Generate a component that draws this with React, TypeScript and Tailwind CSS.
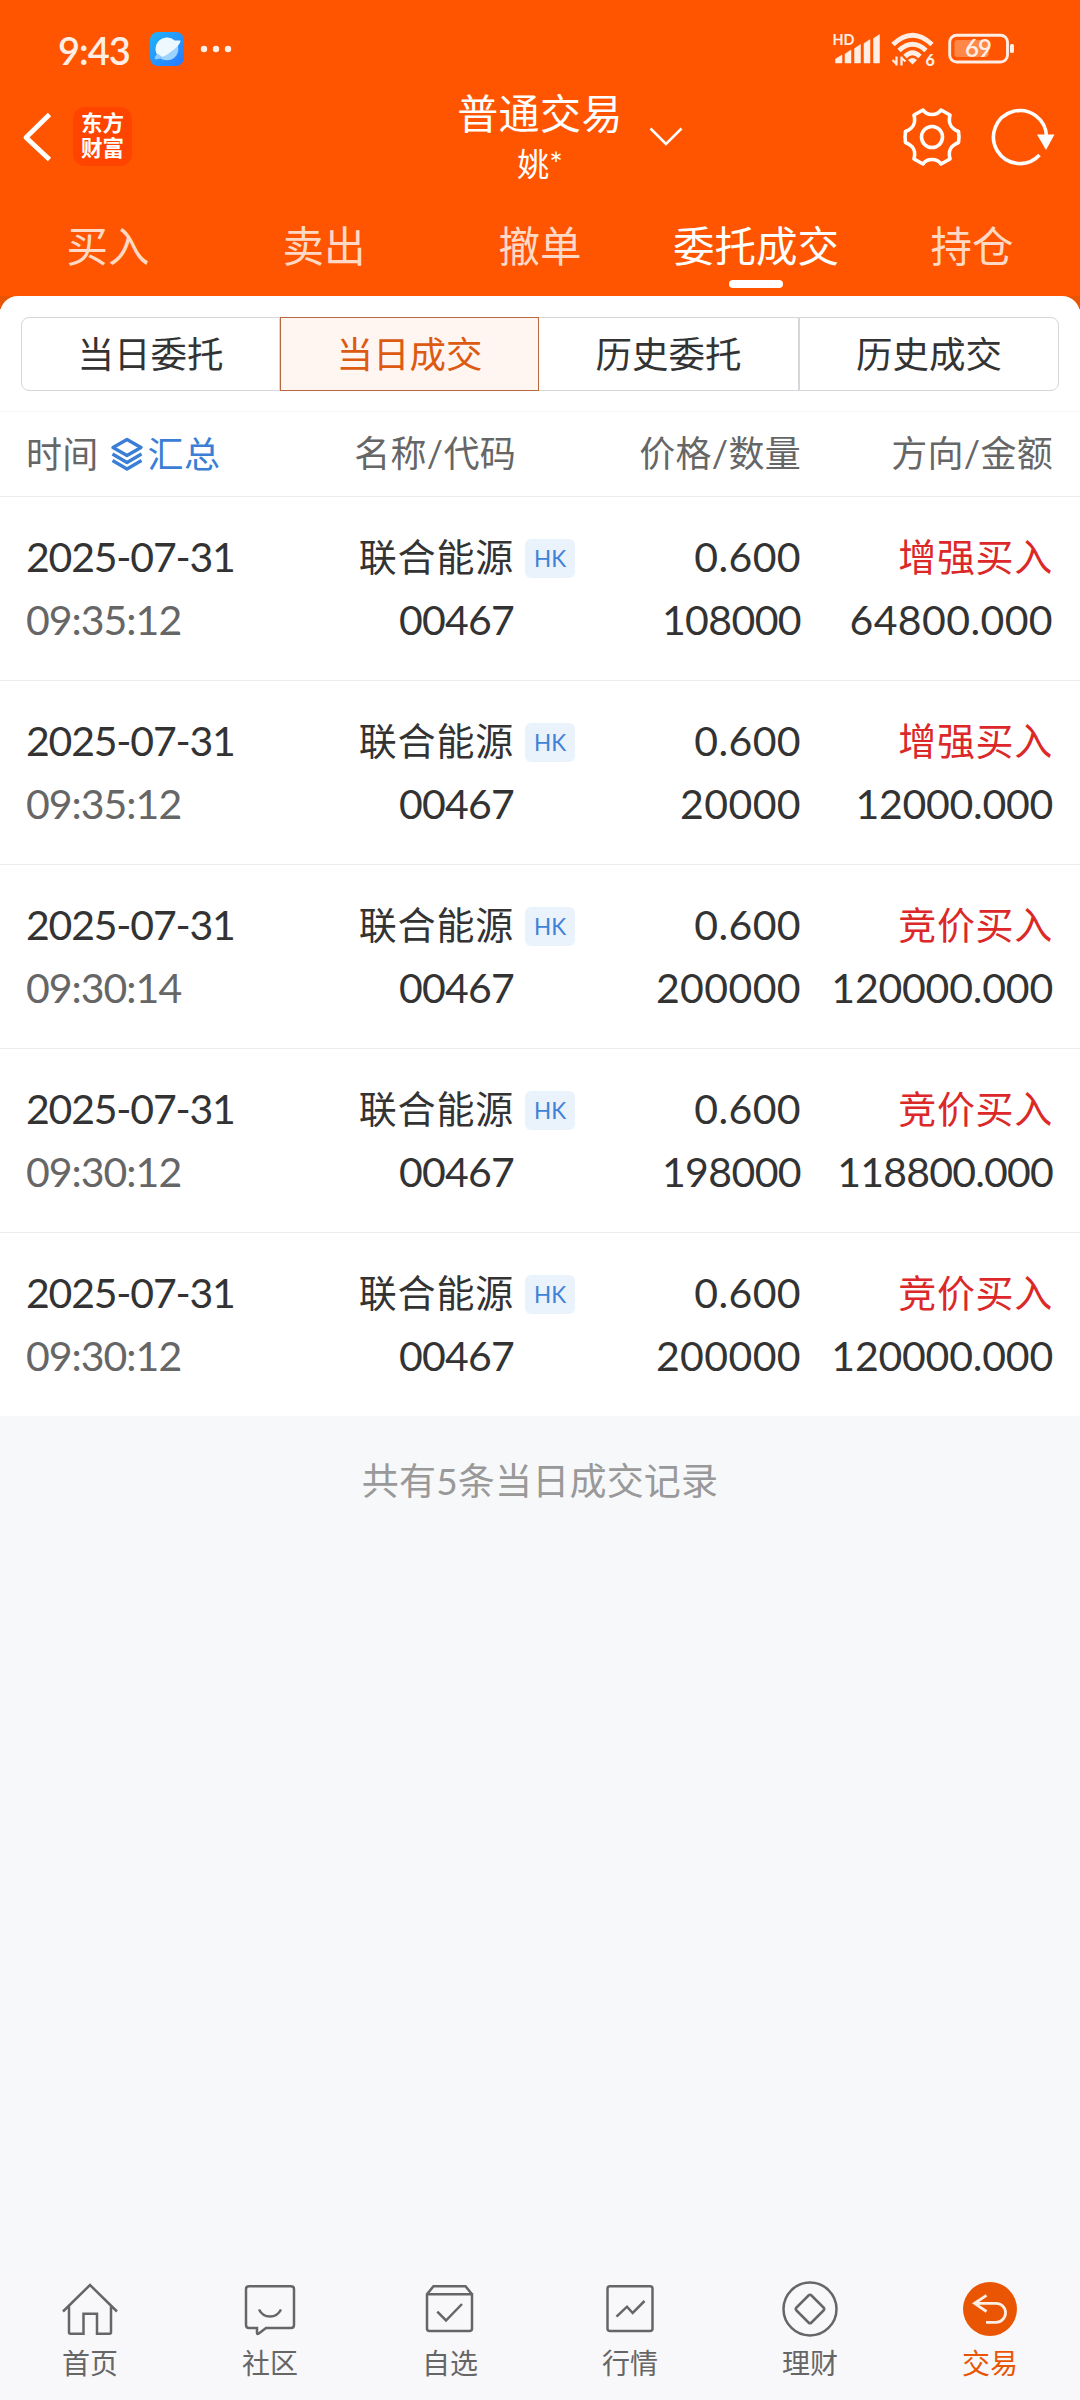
import React from "react";

type Deal = {
    date: string;
    time: string;
    name: string;
    code: string;
    price: string;
    amount: string;
    side: string;
    total: string;
}

const deals: Deal[] = [
    { date: "2025-07-31", time: "09:35:12", name: "联合能源", code: "00467", price: "0.600", amount: "108000", side: "增强买入", total: "64800.000" },
    { date: "2025-07-31", time: "09:35:12", name: "联合能源", code: "00467", price: "0.600", amount: "20000", side: "增强买入", total: "12000.000" },
    { date: "2025-07-31", time: "09:30:14", name: "联合能源", code: "00467", price: "0.600", amount: "200000", side: "竞价买入", total: "120000.000" },
    { date: "2025-07-31", time: "09:30:12", name: "联合能源", code: "00467", price: "0.600", amount: "198000", side: "竞价买入", total: "118800.000" },
    { date: "2025-07-31", time: "09:30:12", name: "联合能源", code: "00467", price: "0.600", amount: "200000", side: "竞价买入", total: "120000.000" },
];

const tabs = ["买入", "卖出", "撤单", "委托成交", "持仓"];
const segments = ["当日委托", "当日成交", "历史委托", "历史成交"];

const StatusBar: React.FC = () => (
    <div className="flex h-[98px] items-center justify-between pl-[58px] pr-[66px] text-[#ffeee5]">
        <div className="flex items-center">
            <span className="mt-[1px] w-[92px] text-[38px] font-semibold leading-none tracking-[-1px]">9:43</span>
            <svg width="34" height="34" viewBox="0 0 34 34">
                <defs>
                    <linearGradient id="planet" x1="0" y1="0" x2="1" y2="1">
                        <stop offset="0" stopColor="#20b4fb" />
                        <stop offset="1" stopColor="#2a78ff" />
                    </linearGradient>
                </defs>
                <rect width="34" height="34" rx="8" fill="url(#planet)" />
                <circle cx="17" cy="17" r="11.300" fill="#9dd3ff" />
                <path d="M10 26Q5 21 5.700 16A11.300 11.300 0 0 1 24.500 8.500L30.500 8.500Q30.500 12 24 17.500Q17 23.500 10 26Z" fill="#eef9ff" />
                <path d="M6 23Q4 26 5 27Q8 28 13 25.500L8 22Z" fill="#8accff" />
            </svg>
            <svg className="ml-[16px]" width="32" height="8" viewBox="0 0 32 8" fill="currentColor">
                <circle cx="4" cy="4" r="3.200" />
                <circle cx="16" cy="4" r="3.200" />
                <circle cx="28" cy="4" r="3.200" />
            </svg>
        </div>
        <svg width="186" height="40" viewBox="828 30 186 40" fill="currentColor">
            <text x="832.500" y="46" fontSize="15.500" fontWeight="700" textLength="22" lengthAdjust="spacingAndGlyphs">HD</text>
            <path d="M835.500 60l6.500-4v8h-6.500zM845 55l6-4v13h-6zM854.500 49.500l6-4V64h-6zM864 44.500l6-4V64h-6zM873.500 39.500l6-4V64h-6z" stroke="currentColor" strokeWidth="0.500" strokeLinejoin="round" />
            <g fill="none" stroke="currentColor" strokeWidth="4.800">
                <path d="M893 45.500Q912.500 27 932 45.500" />
                <path d="M899 51.500Q912.500 39 926 51.500" />
                <path d="M905 57.500Q912.500 50 920 57.500" />
            </g>
            <path d="M912.500 65.500l-4.500-4.500q4.500-4 9 0z" />
            <path d="M896.500 57.500v9M897 65.500l-4.500-4.500M901.500 66.500v-9M901 58.500l4.500 4" fill="none" stroke="currentColor" strokeWidth="2.300" />
            <text x="925.500" y="66.500" fontSize="16" fontWeight="900">6</text>
            <rect x="949.700" y="36.200" width="57.800" height="26.800" rx="7" fill="none" stroke="currentColor" strokeWidth="2.900" />
            <rect x="954.500" y="41" width="34" height="17" rx="3" fill="#ff8848" />
            <text x="965" y="57.500" fontSize="24" fontWeight="600" textLength="27">69</text>
            <rect x="1010" y="45" width="4" height="9" rx="1.500" />
        </svg>
    </div>
)

const TitleBar: React.FC = () => (
    <div className="flex h-[98px] items-start text-white">
        <div className="flex w-[320px] items-center pl-[22px] pt-[9px]">
            <svg width="30" height="50" viewBox="0 0 30 50" fill="none" stroke="currentColor" strokeWidth="4.800">
                <path d="M27.500 2.500L4 25.500L27.500 47.500" strokeLinejoin="round" />
            </svg>
            <div className="ml-[21px] flex h-[59px] w-[59px] flex-col items-center justify-center rounded-[12px] bg-[#ff4400] pb-[2px] text-[21.5px] font-bold leading-[25px]">
                <span>东方</span>
                <span>财富</span>
            </div>
        </div>
        <div className="flex w-[440px] items-start justify-center">
            <div className="flex flex-col items-center">
                <span className="-mt-[9px] text-[41px] leading-[50px] tracking-[0.4px]">普通交易</span>
                <span className="mt-[6px] text-[32px] leading-[38px]">姚*</span>
            </div>
        </div>
        <div className="-ml-[111px] flex w-[431px] items-center pt-[9px]">
            <svg width="34" height="20" viewBox="0 0 34 20" fill="none" stroke="currentColor" strokeWidth="2.600">
                <path d="M1.500 1.500L17 17L32.500 1.500" />
            </svg>
            <svg className="ml-[219px]" width="60" height="60" viewBox="-30 -30 60 60" fill="none" stroke="currentColor" strokeWidth="3.600" strokeLinejoin="round">
                <path d="M-9-27Q-6-22.500 0-22.500Q6-22.500 9-27L18-22C16-14 18-9 26.500-5.500Q27.500 0 26.500 5.500C18 9 16 14 18 22L9 27Q6 22.500 0 22.500Q-6 22.500-9 27L-18 22C-16 14-18 9-26.500 5.500Q-27.500 0-26.500-5.500C-18-9-16-14-18-22Z" />
                <circle r="10.500" />
            </svg>
            <svg className="ml-[29px]" width="64" height="60" viewBox="-29 -30 64 60">
                <path d="M26.500 0A26.500 26.500 0 1 0 19.500 18" fill="none" stroke="currentColor" strokeWidth="3.600" />
                <path d="M17-2.500H34.500L26 13Z" fill="currentColor" />
            </svg>
        </div>
    </div>
)

const LayersIcon: React.FC = () => (
    <svg width="32" height="34" viewBox="0 0 32 34" fill="none" stroke="currentColor" strokeWidth="3.300" strokeLinejoin="round">
        <path d="M16 2.500L30 10.500L16 18.500L2 10.500Z" />
        <path d="M1.500 17L16 25.500L30.500 17" />
        <path d="M1.500 23.500L16 32L30.500 23.500" />
    </svg>
)

// ones are narrow, so numbers holding them get tightened
const Num: React.FC<{ value: string }> = ({ value }) => {
    const ones = value.split("1").length - 1;
    return <span style={{ letterSpacing: `${(0.4 - (6 * ones) / value.length).toFixed(2)}px` }}>{value}</span>
}

const DealRow: React.FC<{ deal: Deal }> = ({ deal }) => (
    <div className="grid h-[184px] grid-cols-[26px_204px_284px_287px_252px] border-b border-[#ececec] pt-[28px] text-[41px] leading-[63px] text-[#333] last:h-[183px] last:border-b-0">
        <div />
        <div className="flex flex-col whitespace-nowrap">
            <span className="tracking-[-1.2px]">{deal.date}</span>
            <span className="tracking-[-1px] text-[#666]">{deal.time}</span>
        </div>
        <div className="flex flex-col items-end">
            <div className="flex h-[63px] items-center">
                <span className="text-[38px] tracking-[0.8px]">{deal.name}</span>
                <span className="-mr-[61px] ml-[11px] mt-[3px] h-[39px] w-[50px] rounded-[6px] bg-[#eaf2fc] text-center text-[22.5px] leading-[40px] text-[#3f82d8]">HK</span>
            </div>
            <span className="tracking-[-0.8px]">{deal.code}</span>
        </div>
        <div className="flex flex-col items-end">
            <Num value={deal.price} />
            <Num value={deal.amount} />
        </div>
        <div className="flex flex-col items-end">
            <span className="text-[38px] tracking-[0.7px] text-[#dc2828]">{deal.side}</span>
            <Num value={deal.total} />
        </div>
    </div>
)

type NavItem = {
    label: string;
    icon: React.ReactNode;
    active?: boolean;
}

const navItems: NavItem[] = [
    { label: "首页", icon: <path d="M2 31.500L29 5L56 31.500M8 26V52.500Q8 53.700 9.500 53.700H22.500V33.700H36V53.700H48.500Q50 53.700 50 52.500V26" /> },
    { label: "社区", icon: <><path d="M8 6.200H50Q53 6.200 53 9V45Q53 48 50 48H25L17.500 53.700Q16 54.500 16 53V48H8Q5 48 5 45V9Q5 6.200 8 6.200Z" /><path d="M18 29.500Q21.500 36.500 29 36.500Q36.500 36.500 40 29.500" /></> },
    { label: "自选", icon: <><path d="M6 14.300H51V48.500Q51 51 48.500 51H8.500Q6 51 6 48.500V14.300L12.500 6.200H44.500L51 14.300" /><path d="M16.300 31.700L25 40.500L41 24" /></> },
    { label: "行情", icon: <><rect x="6.500" y="6.200" width="45" height="44.800" rx="2.500" /><path d="M15.500 36.700L26 26.700L31.700 33L43.500 21" /></> },
    { label: "理财", icon: <><circle cx="29" cy="29" r="26.500" /><path d="M27.500 15.500Q29 14 30.500 15.500L42.500 27.500Q44 29 42.500 30.500L30.500 42.500Q29 44 27.500 42.500L15.500 30.500Q14 29 15.500 27.500Z" /></> },
    { label: "交易", active: true, icon: <><circle cx="29" cy="29" r="27" fill="#ea5504" stroke="none" /><path d="M25.500 15.300L13.500 23.300L25.500 31.500M14 23.300H35A9.500 9.500 0 0 1 35 42.300H25" stroke="#ffeee5" strokeWidth="2.800" /></> },
];

const App: React.FC = () => {
    return (
        <div className="flex h-[2400px] w-[1080px] flex-col overflow-hidden bg-[#f6f8fa] font-[Lato,'Noto_Sans_CJK_SC',sans-serif]">
            <header className="h-[296px] bg-[#ff5500]">
                <StatusBar />
                <TitleBar />
                <div className="grid h-[100px] grid-cols-5">
                    {tabs.map((tab, i) => (
                        <div key={tab} className={i === 3 ? "flex flex-col items-center text-[41.5px] text-white" : "flex flex-col items-center text-[41.5px] text-[#ffd9c5]"}>
                            <span className="mt-[20px] leading-[60px]">{tab}</span>
                            {i === 3 && <div className="mt-[4px] h-[8px] w-[54px] rounded-[4px] bg-white" />}
                        </div>
                    ))}
                </div>
            </header>

            <div className="bg-[linear-gradient(#ea5504_13px,#fff_13px)]">
                <div className="rounded-t-[18px] bg-white pt-[21px]">
                    <div className="mx-[21px] grid h-[74px] grid-cols-[259px_259px_260px_260px] text-[36.5px] leading-[72px] text-[#333]">
                        {segments.map((seg, i) => (
                            <div
                                key={seg}
                                className={
                                    i === 1
                                        ? "border border-[#b8683c] bg-[#fff5f1] text-center text-[#dc5a12]"
                                        : i === 0
                                            ? "rounded-l-[8px] border border-[#d6d6da] text-center"
                                            : i === 2
                                                ? "border-y border-r border-[#d6d6da] text-center"
                                                : "rounded-r-[8px] border border-[#d6d6da] text-center"
                                }
                            >
                                {seg}
                            </div>
                        ))}
                    </div>
                    <div className="mt-[20px] grid h-[86px] grid-cols-[26px_205px_285px_285px_252px] border-y border-t-[#f7f7f7] border-b-[#ececec] text-[36px] leading-[83px] tracking-[0.3px] text-[#666]">
                        <div />
                        <div className="flex items-center whitespace-nowrap">
                            时间
                            <span className="ml-[12px] flex items-center gap-[5px] text-[#3a7fd5]"><LayersIcon />汇总</span>
                        </div>
                        <div className="text-right">名称/代码</div>
                        <div className="text-right">价格/数量</div>
                        <div className="text-right">方向/金额</div>
                    </div>
                    <div>
                        {deals.map((deal, i) => <DealRow key={i} deal={deal} />)}
                    </div>
                </div>
            </div>

            <div className="flex-1 pt-[38px] text-center text-[37px] leading-[54px] tracking-[0.2px] text-[#999]">共有5条当日成交记录</div>

            <nav className="grid h-[130px] grid-cols-6 bg-[#f8f8fb] pt-[10px]">
                {navItems.map(item => (
                    <div key={item.label} className={item.active ? "flex flex-col items-center text-[#ea5504]" : "flex flex-col items-center text-[#666]"}>
                        <svg width="58" height="58" viewBox="0 0 58 58" fill="none" stroke="currentColor" strokeWidth="2.500">{item.icon}</svg>
                        <span className="mt-[5px] text-[28px] leading-[40px]">{item.label}</span>
                    </div>
                ))}
            </nav>
        </div>
    )
}

export default App
